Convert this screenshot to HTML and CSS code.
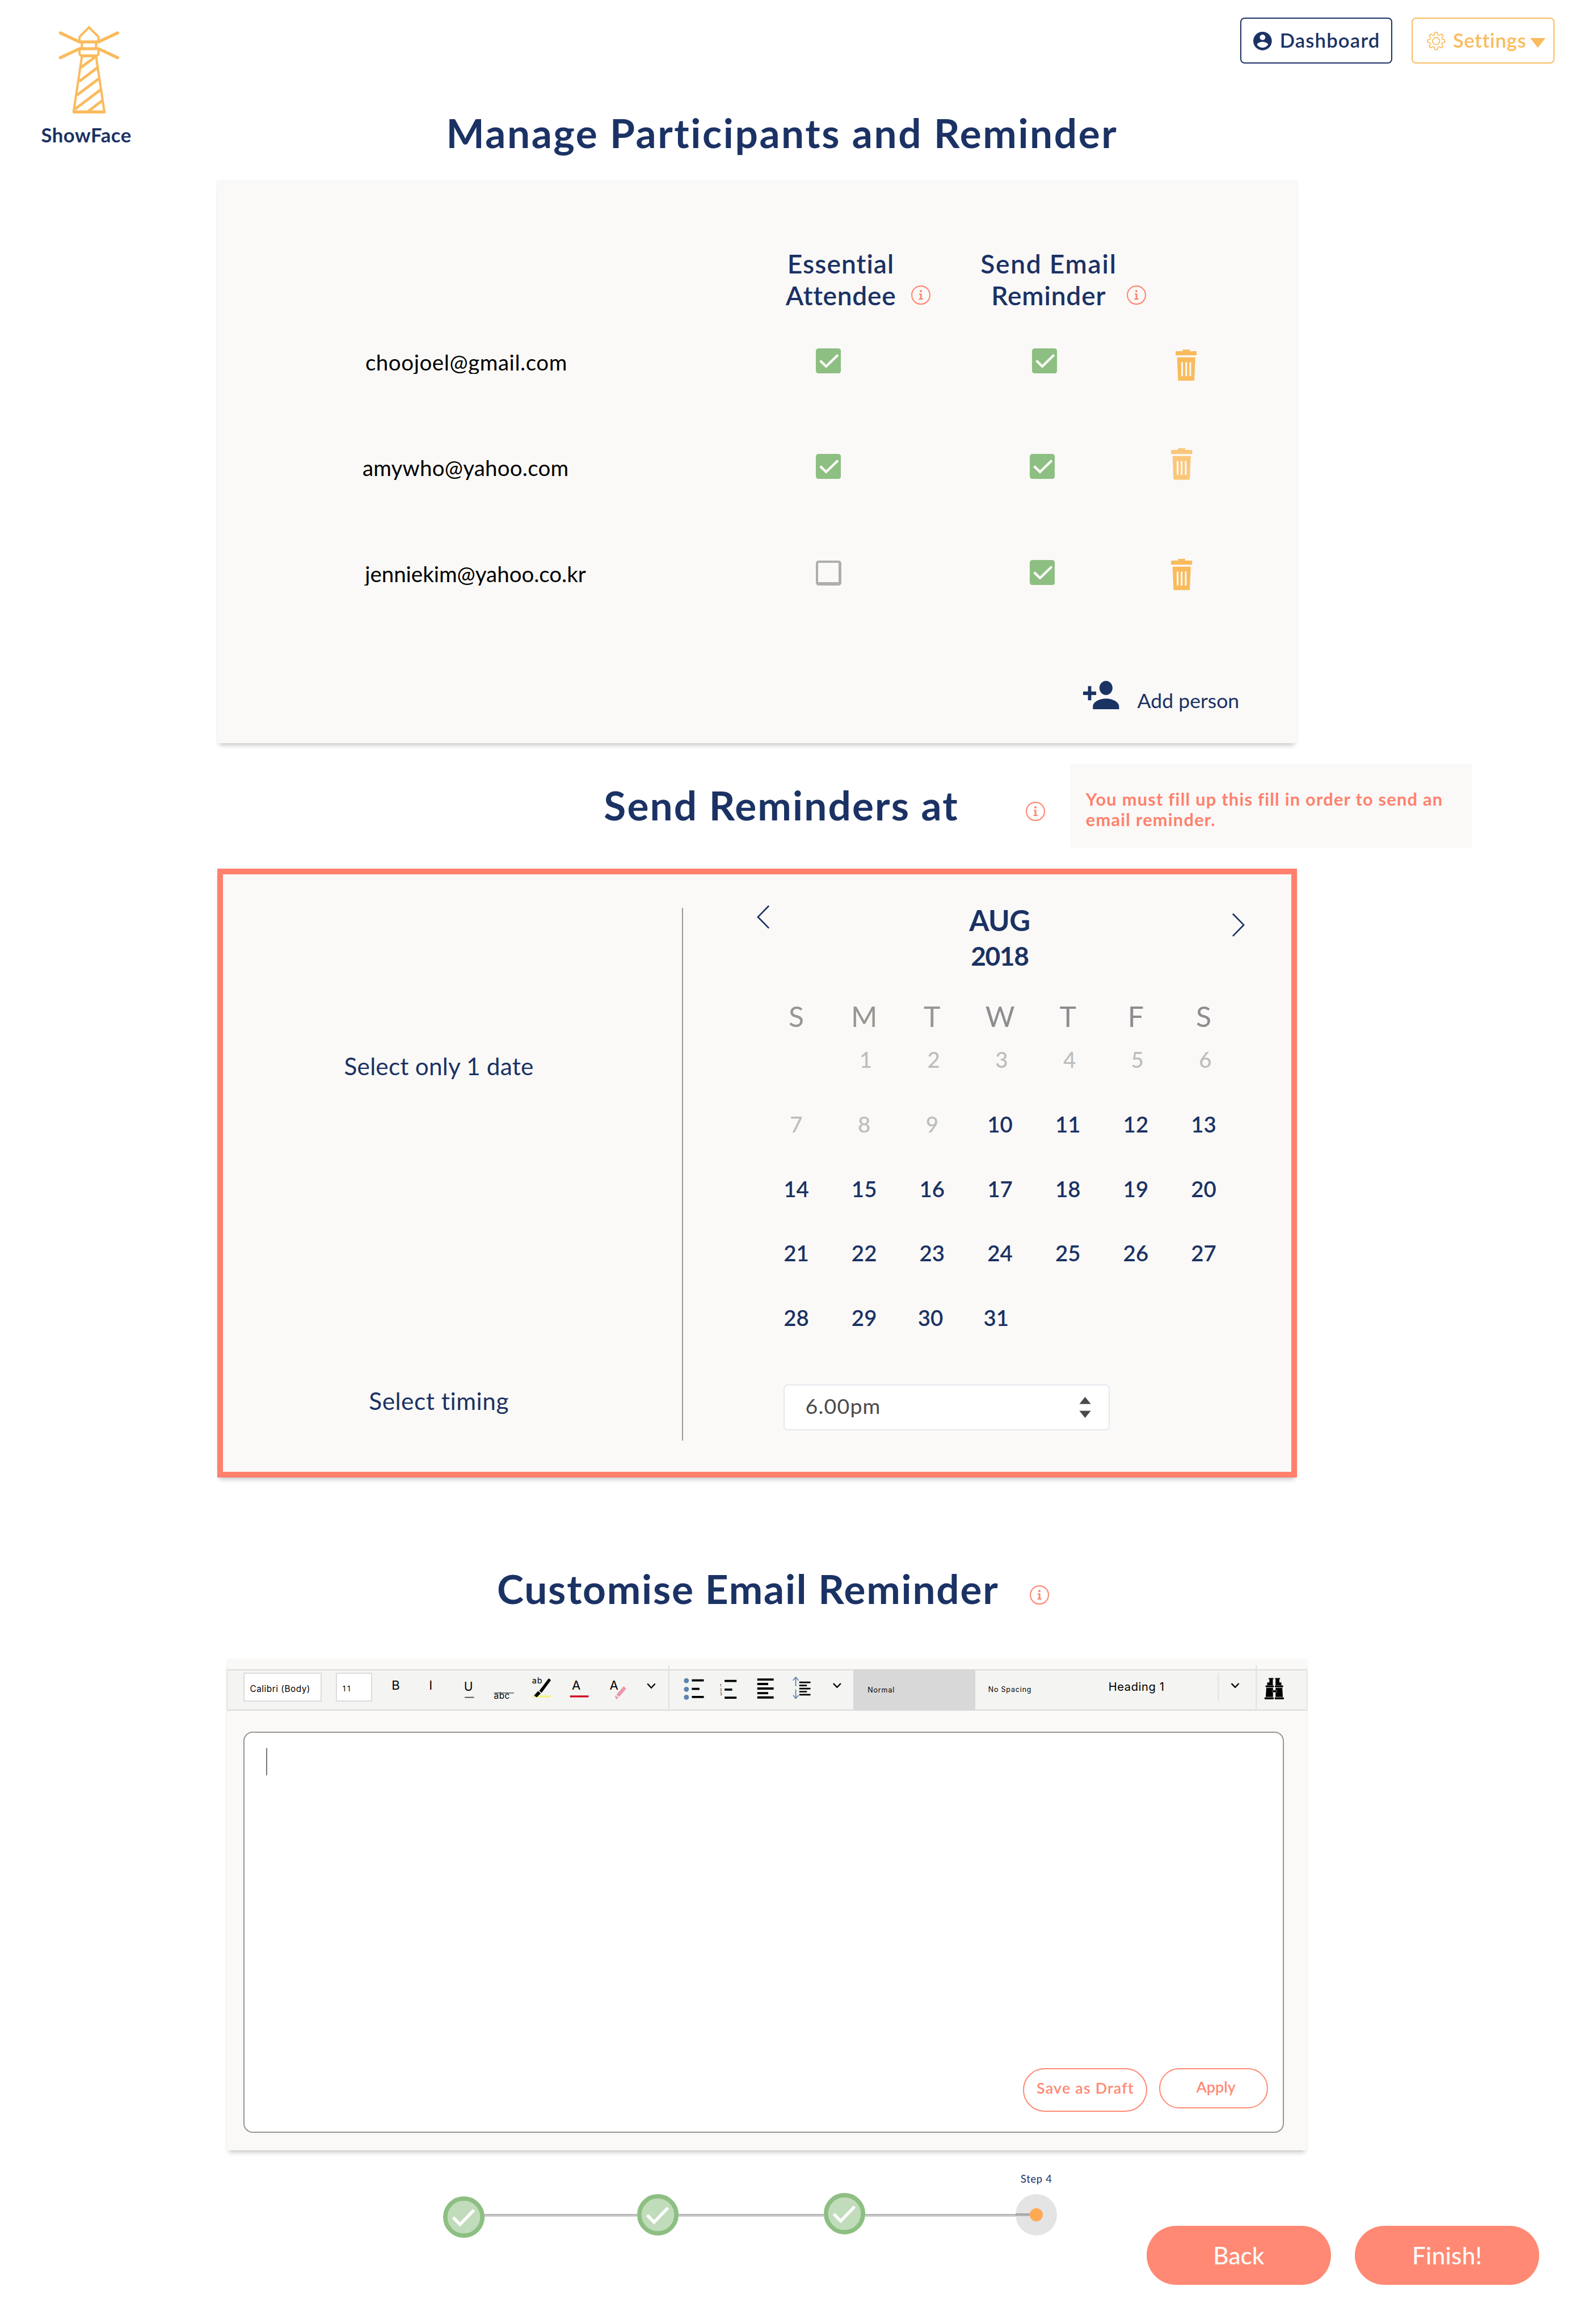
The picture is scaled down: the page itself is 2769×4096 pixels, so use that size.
FILE: index.html
```html
<!DOCTYPE html>
<html lang="en">
<head>
<meta charset="utf-8">
<title>ShowFace – Manage Participants and Reminder</title>
<link rel="stylesheet" href="styles.css">
</head>
<body>

<svg class="defs" aria-hidden="true">
  <symbol id="info" viewBox="0 0 35 35">
    <circle cx="17.5" cy="17.5" r="16.4" fill="none" stroke="#ff8974" stroke-width="2.2"/>
    <circle cx="17.4" cy="10.3" r="2.2" fill="#ff8974"/>
    <path d="M14.2 14.6h5v9h2.2v2.4h-7.8v-2.4h2.4v-6.8h-1.8z" fill="#ff8974"/>
  </symbol>
  <symbol id="check" viewBox="0 0 46 46">
    <rect width="46" height="46" rx="5" fill="#8dbf82"/>
    <path d="M8 22.5 18.8 33 40.5 12" fill="none" stroke="#faf9f7" stroke-width="4.6"/>
  </symbol>
  <symbol id="trash" viewBox="0 0 39 58">
    <path d="M13 0h13v3.2h11.5q1.5 0 1.5 1.5v6H0v-6q0-1.5 1.5-1.5H13z" fill="#fabb5c"/>
    <path fill-rule="evenodd" fill="#fabb5c" d="M2.8 14.2h33.4l-1.7 41q-.2 2.8-2.6 2.8H7.1q-2.4 0-2.6-2.8zM10.400 24.500v23a1.600 1.600 0 0 0 3.200 0v-23a1.600 1.600 0 0 0-3.200 0zM17.900 24.500v23a1.600 1.600 0 0 0 3.200 0v-23a1.600 1.600 0 0 0-3.200 0zM25.400 24.500v23a1.600 1.600 0 0 0 3.200 0v-23a1.600 1.600 0 0 0-3.200 0z"/>
  </symbol>
  <symbol id="done" viewBox="0 0 76 76">
    <circle cx="38" cy="38" r="34" fill="#c0dcba" stroke="#8dbf82" stroke-width="8"/>
    <path d="M18.500 38.500 31 51.500 56.500 25" fill="none" stroke="#fff" stroke-width="5.600"/>
  </symbol>
</svg>

<header class="header">
  <div class="brand">
    <svg class="brand-mark" viewBox="107 47 112 162" fill="none" stroke="#fabb5c">
      <g stroke-width="5.600" stroke-linecap="round" stroke-linejoin="round">
        <path d="M110.500 60.500 145.500 77h35L215.500 60.500M110.500 106 145.500 89.500h35L215.500 106"/>
        <path d="M150 102.500h26M135.500 205.300h55.500"/>
      </g>
      <path stroke-width="4.200" d="M145.600 77v-7q0-2 1.600-4L163 50.500 178.900 66q1.600 2 1.600 4v7M150 77v12.500M176 77v12.500M145.600 90v8q.5 3.500 4 5M180.500 90v8q-.5 3.500-4 5M150 104 134.800 205M176 104 191.200 205"/>
      <path stroke-width="5" d="M176 103.500 148 124M178 124.500 145 149.500M181 144.500 141 174.500M184.500 164.500 137 200.500M187.500 184.500 162 204"/>
    </svg>
    <span class="brand-name">ShowFace</span>
  </div>
  <h1 class="title title-main">Manage Participants and Reminder</h1>
  <nav class="nav">
    <a class="nav-btn nav-dashboard">
      <svg class="nav-icon" viewBox="2 2 20 20"><path fill="#1b3264" d="M12 2C6.480 2 2 6.480 2 12s4.480 10 10 10 10-4.480 10-10S17.520 2 12 2zm0 3c1.660 0 3 1.340 3 3s-1.340 3-3 3-3-1.340-3-3 1.340-3 3-3zm0 14.200c-2.500 0-4.710-1.280-6-3.220.03-1.990 4-3.080 6-3.080 1.990 0 5.970 1.090 6 3.080-1.290 1.940-3.500 3.220-6 3.220z"/></svg>
      <span>Dashboard</span>
    </a>
    <a class="nav-btn nav-settings">
      <svg class="nav-icon" viewBox="-17 -17 34 34" fill="none" stroke="#fabb5c" stroke-width="1.800">
        <g id="t2">
          <g id="t1">
            <path id="t" d="M-4.400-10.600C-3-10.900-2.800-12.200-2.800-13.600Q-2.700-16 0-16T2.800-13.600C2.800-12.200 3-10.900 4.400-10.600"/>
            <use href="#t" transform="rotate(45)"/>
          </g>
          <use href="#t1" transform="rotate(90)"/>
        </g>
        <use href="#t2" transform="rotate(180)"/>
        <circle r="6.500"/>
      </svg>
      <span>Settings</span>
      <svg class="nav-caret" viewBox="0 0 28 18"><path d="M0 0h28L14 18z" fill="#fabb5c"/></svg>
    </a>
  </nav>
</header>

<section class="card people">
  <div class="people-head">
    <div class="col-name col-essential"><span class="essential">Essential</span><span class="attendee">Attendee</span></div>
    <svg class="info info-essential"><use href="#info"/></svg>
    <div class="col-name col-send"><span class="send-email">Send Email</span><span class="reminder">Reminder</span></div>
    <svg class="info info-send"><use href="#info"/></svg>
  </div>
  <div class="person person-1">
    <span class="email">choojoel@gmail.com</span>
    <svg class="box"><use href="#check"/></svg>
    <svg class="box box-send"><use href="#check"/></svg>
    <svg class="trash"><use href="#trash"/></svg>
  </div>
  <div class="person person-2">
    <span class="email">amywho@yahoo.com</span>
    <svg class="box"><use href="#check"/></svg>
    <svg class="box box-send"><use href="#check"/></svg>
    <svg class="trash"><use href="#trash"/></svg>
  </div>
  <div class="person person-3">
    <span class="email">jenniekim@yahoo.co.kr</span>
    <span class="box box-empty"></span>
    <svg class="box box-send"><use href="#check"/></svg>
    <svg class="trash"><use href="#trash"/></svg>
  </div>
  <div class="add">
    <svg class="add-icon" viewBox="1 4 22 16" preserveAspectRatio="none"><path fill="#1b3264" d="M15 12c2.210 0 4-1.790 4-4s-1.790-4-4-4-4 1.790-4 4 1.790 4 4 4zm-9-2V7H4v3H1v2h3v3h2v-3h3v-2H6zm9 4c-4.200 0-8 2-8 4.500V20h16v-1.500C23 16 19.200 14 15 14z"/></svg>
    <span>Add person</span>
  </div>
</section>

<div class="section-head head-send">
  <h2 class="title title-send">Send Reminders at</h2>
  <svg class="info"><use href="#info"/></svg>
  <p class="tip">You must fill up this fill in order to send an<br>email reminder.</p>
</div>

<section class="card schedule">
  <div class="labels">
    <span class="label label-date">Select only 1 date</span>
    <span class="label label-time">Select timing</span>
  </div>
  <div class="rule"></div>
  <div class="picker">
    <div class="cal-head">
      <svg class="chev chev-prev" viewBox="0 0 24 44"><path d="M22 1.500 2 22l20 20.500" fill="none" stroke="#1b3264" stroke-width="2.800"/></svg>
      <div class="month"><span class="month-name">AUG</span><span class="year">2018</span></div>
      <svg class="chev chev-next" viewBox="0 0 24 44"><path d="M2 1.500 22 22 2 42.500" fill="none" stroke="#1b3264" stroke-width="2.800"/></svg>
    </div>
    <div class="week weekdays"><span>S</span><span>M</span><span>T</span><span>W</span><span>T</span><span>F</span><span>S</span></div>
    <div class="week days past first"><span></span><span>1</span><span>2</span><span>3</span><span>4</span><span>5</span><span>6</span></div>
    <div class="week days"><span class="past">7</span><span class="past">8</span><span class="past">9</span><span>10</span><span>11</span><span>12</span><span>13</span></div>
    <div class="week days"><span>14</span><span>15</span><span>16</span><span>17</span><span>18</span><span>19</span><span>20</span></div>
    <div class="week days"><span>21</span><span>22</span><span>23</span><span>24</span><span>25</span><span>26</span><span>27</span></div>
    <div class="week days last"><span>28</span><span>29</span><span>30</span><span>31</span></div>
    <div class="select">
      <span>6.00pm</span>
      <svg class="spin" viewBox="0 0 22 40"><path d="M11 1 21.500 14H.5zM.5 26.500h21L11 39.500z" fill="#4a4a4a"/></svg>
    </div>
  </div>
</section>

<div class="section-head head-mail">
  <h2 class="title title-mail">Customise Email Reminder</h2>
  <svg class="info"><use href="#info"/></svg>
</div>

<section class="card mail">
  <div class="toolbar">
    <span class="field field-font">Calibri (Body)</span>
    <span class="field field-size">11</span>
    <svg class="tools tools-text" viewBox="700 3062 527 72">
      <text x="718" y="3097" font-size="23">B</text>
      <text x="786.500" y="3097" font-size="23">I</text>
      <text x="850.500" y="3099" font-size="22">U</text>
      <path d="M852 3111.500h17" stroke="#444" stroke-width="1.800"/>
      <text x="905.500" y="3114" font-size="16" letter-spacing=".5">abc</text>
      <path d="M905.500 3103.300h36.500" stroke="#555" stroke-width="1.500"/>
      <path d="M976 3109.600h34" stroke="#f3f57a" stroke-width="3.400"/>
      <text x="975.500" y="3086" font-size="15" letter-spacing=".8">ab</text>
      <path d="M1006 3076.500 1010 3080 993 3103 988.500 3099.500zM986.500 3100 991.500 3104 984 3111.500 979 3108z"/>
      <text x="1048.500" y="3097" font-size="23">A</text>
      <path d="M1045 3109.600h34" stroke="#d0021b" stroke-width="3.400"/>
      <text x="1117.500" y="3097" font-size="23">A</text>
      <path d="M1143.500 3091 1148 3095.500 1135 3110.500 1130 3106.500zM1128.500 3108 1133.500 3112 1131.500 3115 1127.500 3112z" fill="#ea96ae"/>
      <path d="M1187 3086.500 1194 3094 1201 3086.500" fill="none" stroke="#000" stroke-width="2.400"/>
      <path d="M1226.200 3053v80" stroke="#e0e0e0" stroke-width="2"/>
    </svg>
    <svg class="tools tools-para" viewBox="1227 3062 337 72">
      <g fill="#5b83b0"><circle cx="1258" cy="3080.800" r="4.600"/><circle cx="1258" cy="3096.700" r="4.600"/><circle cx="1258" cy="3111.300" r="4.600"/></g>
      <path d="M1268 3080.300h22M1268 3096h14M1268 3110.700h22M1328 3081.300h22M1328 3097.300h14M1328 3112h22" stroke="#000" stroke-width="3.800"/>
      <g font-size="6"><text x="1319.500" y="3092">1</text><text x="1319.500" y="3100">2</text><text x="1319.500" y="3108">3</text></g>
      <path d="M1388 3078.700h30M1388 3087h20M1388 3095.300h30M1388 3103.700h20M1388 3111.700h30" stroke="#000" stroke-width="4"/>
      <path d="M1465 3084h20.500M1465 3089.700h14M1465 3095.400h20.500M1465 3101h14M1465 3106.500h20.500" stroke="#000" stroke-width="2.800"/>
      <path d="M1453.500 3080.500 1458.500 3074.500 1463.500 3080.500M1458.500 3074.500V3091M1458.500 3097v16.500M1453.500 3107.500 1458.500 3113.500 1463.500 3107.500" fill="none" stroke="#5f82ae" stroke-width="1.800"/>
      <path d="M1527.500 3086 1534.300 3093 1541 3086" fill="none" stroke="#000" stroke-width="2.400"/>
    </svg>
    <span class="style style-normal">Normal</span>
    <span class="style style-nospacing">No Spacing</span>
    <span class="style style-heading">Heading 1</span>
    <svg class="tools tools-find" viewBox="2233 3062 162 72">
      <path d="M2233.500 3067v51M2303 3053v80" stroke="#e0e0e0" stroke-width="2"/>
      <path d="M2257.500 3086 2264.300 3093 2271 3086" fill="none" stroke="#000" stroke-width="2.400"/>
      <g transform="translate(2290 3060) scale(.3333)">
        <path d="M107 48h27v6h-4v34H99V72h12V54h-4zM143 48h27v6h-4v18h11v16h-32V54h-2z"/>
        <path d="M94 102h37v50H91zM145 102h37l3 50h-40z"/>
        <rect x="90" y="89" width="46" height="10" rx="4"/><rect x="141" y="89" width="46" height="10" rx="4"/>
        <rect x="84" y="154" width="51" height="11" rx="4"/><rect x="140" y="154" width="51" height="11" rx="4"/>
        <rect x="126" y="115" width="26" height="11" rx="3" stroke="#888" stroke-width="2.500"/>
      </g>
    </svg>
  </div>
  <div class="editor">
    <span class="caret"></span>
    <div class="actions">
      <a class="pill pill-save">Save as Draft</a>
      <a class="pill pill-apply">Apply</a>
    </div>
  </div>
</section>

<footer class="footer">
  <div class="steps">
    <svg class="step step-1"><use href="#done"/></svg>
    <span class="track track-1"></span>
    <svg class="step step-2"><use href="#done"/></svg>
    <span class="track track-2"></span>
    <svg class="step step-3"><use href="#done"/></svg>
    <span class="track track-3"></span>
    <div class="current">
      <span class="current-name">Step 4</span>
      <span class="current-ring"><span class="current-track"></span><span class="current-dot"></span></span>
    </div>
  </div>
  <div class="buttons">
    <a class="button">Back</a>
    <a class="button button-finish">Finish!</a>
  </div>
</footer>

</body>
</html>
```
FILE: styles.css
```css
/* The artboard is 28.8rem wide; 1rem scales with the window */
html { font-size: calc(100vw / 28.8); }

* { box-sizing: border-box; margin: 0; }

body {
  width: 28.8rem;
  height: 42.6rem;
  overflow: hidden;
  background: #fff;
  color: #1b3264;
  font-family: Lato, sans-serif;
}

svg { display: block; flex: none; }
span, a, p, h1, h2 { white-space: nowrap; }
.defs { width: 0; height: 0; position: absolute; }

.title {
  font-size: .74rem;
  line-height: .9rem;
  font-weight: 700;
}

.info { width: .355rem; height: .355rem; }

.card {
  background: #faf9f7;
  box-shadow: 0 .08rem .08rem -.04rem rgba(0, 0, 0, .2), 0 0 .04rem rgba(0, 0, 0, .06);
}

/* Header */
.header {
  display: grid;
  grid-template-columns: 3.98rem 18.76rem auto;
  align-items: start;
  height: 3.32rem;
}
.brand { padding: .47rem 0 0 .755rem; }
.brand-mark { width: 1.12rem; height: 1.62rem; margin-left: .315rem; }
.brand-name {
  display: block;
  margin-top: .17rem;
  font-size: .36rem;
  line-height: .44rem;
  font-weight: 700;
  letter-spacing: .0147em;
}
.title-main { padding: 1.985rem 0 0 4.2rem; letter-spacing: .0359em; }

.nav { display: flex; gap: .358rem; padding-top: .32rem; }
.nav-btn {
  display: flex;
  align-items: flex-start;
  height: .84rem;
  border: 2px solid currentColor;
  border-radius: .08rem;
  font-size: .36rem;
  line-height: .44rem;
  font-weight: 600;
}
.nav-btn span { margin: .18rem 0 0 .135rem; }
.nav-icon { width: .34rem; height: .34rem; margin-top: .24rem; }
.nav-dashboard { width: 2.78rem; padding-left: .22rem; letter-spacing: .0342em; }
.nav-dashboard span { margin-left: .14rem; }
.nav-settings { width: 2.62rem; padding-left: .262rem; color: #fabb5c; letter-spacing: .0209em; }
.nav-caret { width: .28rem; height: .18rem; margin: .36rem 0 0 .07rem; }

/* Participants */
.people { width: 19.8rem; height: 10.3rem; margin-left: 3.98rem; padding-top: 1.21rem; }
.people-head { display: flex; align-items: flex-end; height: 1.152rem; padding-left: 10.42rem; }
.people-head .info { margin-bottom: .095rem; }
.col-name {
  display: flex;
  flex-direction: column;
  align-items: center;
  margin-bottom: -.02rem;
  font-size: .48rem;
  line-height: .576rem;
  font-weight: 600;
}
.col-essential { width: 2.03rem; }
.col-send { width: 2.52rem; margin-left: .91rem; }
.essential { letter-spacing: .0221em; }
.attendee { letter-spacing: .0144em; }
.send-email { letter-spacing: .0375em; }
.reminder { letter-spacing: .0177em; }
.info-essential { margin-left: .27rem; }
.info-send { margin-left: .17rem; }

.person {
  display: grid;
  grid-template-columns: 10.98rem 3.92rem 2.59rem auto;
  align-items: start;
  height: 1.94rem;
}
/* Addresses are trimmed just below the baseline */
.email {
  height: .465rem;
  margin-top: .71rem;
  overflow: hidden;
  color: #000;
  font-size: .4rem;
  line-height: .48rem;
}
.person-1 .email { padding-left: 2.717rem; letter-spacing: .0154em; }
.person-2 .email { padding-left: 2.665rem; letter-spacing: .006em; }
.person-3 .email { padding-left: 2.71rem; letter-spacing: 0; }
.box { width: .46rem; height: .46rem; margin-top: .7rem; }
.box-empty {
  margin-top: .71rem;
  border: solid #aeaeac;
  border-width: 4px 5px 6px 4px;
  border-radius: .05rem;
}
.trash { width: .39rem; height: .58rem; }
.person-1 .box-send { margin-left: .04rem; }
.person-1 .trash { margin: .72rem 0 0 .08rem; }
.person-2 .trash { margin-top: .6rem; opacity: .8; }
.person-3 .trash { margin-top: .68rem; }

.add {
  display: flex;
  align-items: flex-start;
  padding: .98rem 0 0 15.88rem;
  font-size: .37rem;
  line-height: .44rem;
}
.add span { margin: .14rem 0 0 .33rem; }
.add-icon { width: .66rem; height: .52rem; }

/* Section headings */
.section-head { display: flex; align-items: flex-start; }
.head-send { height: 2.3rem; }
.title-send { width: 18.8rem; padding: .695rem 0 0 11.07rem; letter-spacing: .0301em; }
.head-send .info { margin-top: 1.08rem; }
.tip {
  width: 7.36rem;
  height: 1.54rem;
  margin: .38rem 0 0 .465rem;
  padding: .466rem 0 0 .285rem;
  background: #faf9f7;
  color: #ff806c;
  font-size: .32rem;
  line-height: .38rem;
  font-weight: 700;
  letter-spacing: .0403em;
}
.head-mail { height: 3.34rem; }
.title-mail { width: 18.88rem; padding: 1.6rem 0 0 9.11rem; letter-spacing: .0251em; }
.head-mail .info { margin-top: 1.98rem; }

/* Date and time */
.schedule {
  display: flex;
  align-items: flex-start;
  width: 19.8rem;
  height: 11.16rem;
  margin-left: 3.98rem;
  border: 10px solid #ff806c;
}
.labels { display: flex; flex-direction: column; width: 8.42rem; padding-top: 3.255rem; }
.label { font-size: .44rem; line-height: .52rem; }
.label-date { margin-left: 2.225rem; letter-spacing: .0052em; }
.label-time { margin: 5.62rem 0 0 2.68rem; letter-spacing: .0131em; }
.rule { width: 2px; height: 9.76rem; margin-top: .62rem; background: #979797; }
.picker { padding: .52rem 0 0 1.35rem; }
.cal-head { display: flex; align-items: flex-start; justify-content: space-between; width: 8.95rem; }
.chev { width: .24rem; height: .44rem; }
.chev-prev { margin-top: .05rem; }
.chev-next { margin-top: .19rem; }
.month { display: flex; flex-direction: column; align-items: center; margin-right: .05rem; font-weight: 700; }
.month-name { font-size: .53rem; line-height: .64rem; letter-spacing: -.012em; }
.year { margin-top: .035rem; font-size: .48rem; line-height: .6rem; letter-spacing: -.0314em; }
.week { display: grid; grid-template-columns: repeat(7, 1.245rem); margin-left: .1rem; text-align: center; }
.weekdays {
  margin-top: .52rem;
  margin-bottom: .245rem;
  color: #8d8c8f;
  font-size: .52rem;
  line-height: .6rem;
}
.weekdays span:nth-child(-n+3) { color: #979690; }
.days { height: 1.182rem; font-size: .4rem; line-height: .48rem; font-weight: 600; }
.first { margin-left: .13rem; }
.past { color: #bdbdbd; font-weight: 500; }
.last span:nth-child(3) { padding-right: .06rem; }
.last span:nth-child(4) { padding-right: .14rem; }
.select {
  display: flex;
  align-items: flex-start;
  justify-content: space-between;
  width: 5.986rem;
  height: .84rem;
  margin: .29rem 0 0 .484rem;
  padding: .145rem .32rem 0 .385rem;
  background: #fff;
  border: 2px solid #e6e8ee;
  border-radius: .08rem;
  color: #4a4a4a;
  font-size: .39rem;
  line-height: .46rem;
  letter-spacing: .032em;
}
.spin { width: .22rem; height: .4rem; margin-top: .05rem; }

/* Email editor */
.mail { width: 19.8rem; height: 9rem; margin-left: 4.16rem; padding-top: .18rem; }
.toolbar {
  display: flex;
  align-items: flex-start;
  height: .76rem;
  border: solid #dcdcdb;
  border-width: 2px 1px;
  background: #f4f4f2;
  color: #000;
  font-family: Inter, sans-serif;
}
.field { height: .535rem; margin-top: .04rem; padding-left: .1rem; background: #fff; border: 2px solid #dcdcdb; }
.field-font { width: 1.44rem; margin-left: .29rem; padding-top: .182rem; font-size: .16rem; line-height: .2rem; letter-spacing: .033em; }
.field-size { width: .66rem; margin-left: .26rem; padding-top: .19rem; font-size: .14rem; line-height: .18rem; letter-spacing: .2em; }
.tools { height: .72rem; overflow: visible; }
.tools-text { width: 5.27rem; margin-left: .18rem; }
.tools-para { width: 3.37rem; }
.tools-find { width: 1.62rem; }
.style { flex: none; font-size: .13rem; line-height: .16rem; }
.style-normal { width: 2.24rem; height: .76rem; margin-top: -2px; padding: .298rem 0 0 .265rem; background: #d8d8d8; letter-spacing: .0712em; }
.style-nospacing { width: 2.44rem; padding: .268rem 0 0 .235rem; letter-spacing: .0664em; }
.style-heading { width: 2.01rem; padding-top: .175rem; font-size: .21rem; line-height: .24rem; letter-spacing: .028em; }

.editor {
  width: 19.08rem;
  height: 7.36rem;
  margin: .38rem 0 0 .3rem;
  padding-top: .28rem;
  background: #fff;
  border: 2px solid #979692;
  border-radius: .17rem;
}
.caret { display: block; width: 2px; height: .5rem; margin-left: .402rem; background: #777; }
.actions { display: flex; align-items: flex-start; gap: .223rem; margin: 5.37rem 0 0 14.267rem; }
.pill {
  border: 2px solid #ff8974;
  border-radius: .4rem;
  color: #ff8974;
  font-size: .28rem;
  line-height: .34rem;
  font-weight: 600;
  text-align: center;
}
.pill-save { width: 2.28rem; height: .8rem; padding: .177rem 0 0 .02rem; letter-spacing: .0428em; }
.pill-apply { width: 2rem; height: .74rem; padding: .157rem 0 0 .08rem; }

/* Progress and navigation */
.footer { display: flex; align-items: flex-start; height: 3.18rem; padding-left: 8.12rem; }
.steps { display: flex; align-items: flex-start; }
.step { width: .76rem; height: .76rem; }
.step-1 { margin-top: .84rem; }
.step-2 { margin-top: .8rem; }
.step-3 { margin-top: .78rem; }
.track { height: .06rem; margin-top: 1.16rem; background: linear-gradient(#b0b0b0, #d4d4d4); }
.track-1 { width: 2.8rem; }
.track-2 { width: 2.66rem; }
.track-3 { width: 2.76rem; }
.current { display: flex; flex-direction: column; align-items: center; width: .76rem; padding-top: .4rem; }
.current-name { font-size: .19rem; line-height: .24rem; letter-spacing: .0401em; }
.current-ring {
  display: flex;
  align-items: center;
  width: .76rem;
  height: .76rem;
  margin-top: .16rem;
  border-radius: 50%;
  background: #e4e4e4;
}
.current-track { width: .26rem; height: .06rem; background: linear-gradient(#9f9f9f, #bdbdbd); }
.current-dot { width: .24rem; height: .24rem; border-radius: 50%; background: #ffa952; }
.buttons { display: flex; gap: .44rem; margin: 1.38rem 0 0 1.64rem; }
.button {
  width: 3.38rem;
  height: 1.08rem;
  padding-top: .275rem;
  border-radius: .54rem;
  background: #ff8974;
  color: #faf9f7;
  font-size: .44rem;
  line-height: .54rem;
  font-weight: 500;
  text-align: center;
}
.button-finish { letter-spacing: .0054em; }
```
